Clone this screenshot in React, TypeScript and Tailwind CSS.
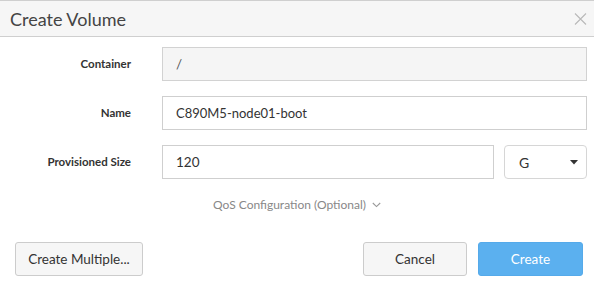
import { useState } from "react";

const font = { fontFamily: "Lato, 'Open Sans', sans-serif" };

export default function App() {
  const [name, setName] = useState("C890M5-node01-boot");
  const [size, setSize] = useState("120");

  return (
    <div className="w-[594px] h-[291px] bg-white text-[#333]" style={font}>
      {/* header */}
      <div className="h-[37px] border-t border-b border-[#cfcfcf] bg-[#f6f6f6] flex items-center justify-between pl-[10px] pr-[7px]">
        <span className="text-[18px] text-[#444] leading-none">Create Volume</span>
        <button className="w-[14px] h-[14px] flex items-center justify-center">
          <svg width="13" height="12" viewBox="0 0 13 12">
            <path d="M1 0.5 L12 11.5 M12 0.5 L1 11.5" stroke="#b9b9b9" strokeWidth="1.1" fill="none" />
          </svg>
        </button>
      </div>

      {/* form */}
      <div className="pt-[10px] pr-[7px] flex flex-col gap-[15px]">
        <div className="flex items-center">
          <label className="w-[131px] text-right text-[11.5px] font-bold">Container</label>
          <div className="ml-[31px] flex-1 h-[34px] border border-[#d2d2d2] bg-[#f5f5f5] flex items-center pl-[13px] text-[13.5px] text-[#555]">
            /
          </div>
        </div>
        <div className="flex items-center">
          <label className="w-[131px] text-right text-[11.5px] font-bold">Name</label>
          <input
            value={name}
            onChange={(e) => setName(e.target.value)}
            className="ml-[31px] flex-1 h-[34px] border border-[#cfcfcf] bg-white pl-[13px] text-[13px] outline-none"
          />
        </div>
        <div className="flex items-center">
          <label className="w-[131px] text-right text-[11.5px] font-bold">Provisioned Size</label>
          <input
            value={size}
            onChange={(e) => setSize(e.target.value)}
            className="ml-[31px] flex-1 h-[34px] border border-[#cfcfcf] bg-white pl-[13px] text-[13.5px] outline-none"
          />
          <div className="ml-[10px] w-[83px] h-[34px] border border-[#d6d6d6] rounded-[4px] bg-white flex items-center justify-between pl-[14px] pr-[8px] text-[14px]">
            <span>G</span>
            <svg width="8" height="5" viewBox="0 0 8 5">
              <path d="M0 0 H8 L4 4.5 Z" fill="#333" />
            </svg>
          </div>
        </div>
      </div>

      {/* qos */}
      <div className="mt-[18px] flex justify-center items-center gap-[6px] text-[12px] leading-[16px] text-[#888]">
        <span>QoS Configuration (Optional)</span>
        <svg width="9" height="6" viewBox="0 0 9 6">
          <path d="M0.8 1 L4.5 4.6 L8.2 1" stroke="#999" strokeWidth="1.1" fill="none" />
        </svg>
      </div>

      {/* footer */}
      <div className="mt-[29px] flex items-center pl-[15px] pr-[11px]">
        <button className="w-[128px] h-[34px] border border-[#cccccc] rounded-[3px] bg-[#f6f6f6] text-[13.5px]">
          Create Multiple...
        </button>
        <div className="flex-1" />
        <button className="w-[104px] h-[34px] border border-[#cccccc] rounded-[3px] bg-[#f6f6f6] text-[13.5px]">
          Cancel
        </button>
        <button className="ml-[11px] w-[105px] h-[34px] border border-[#55aaea] rounded-[3px] bg-[#5bb0ef] text-white text-[13.5px]">
          Create
        </button>
      </div>
    </div>
  );
}
